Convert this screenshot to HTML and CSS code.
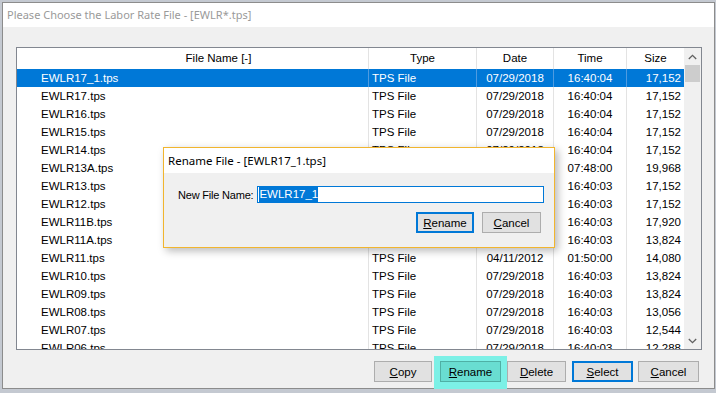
FILE: index.html
```html
<!DOCTYPE html>
<html lang="en">
<head>
  <meta charset="UTF-8">
  <title>Please Choose the Labor Rate File</title>
  <link rel="stylesheet" href="styles.css">
</head>
<body>
  <div class="window">
    <div class="titlebar">Please Choose the Labor Rate File - [EWLR*.tps]</div>
    <div class="client">
      <div class="listview">
        <div class="list-main">
          <div class="row header">
            <span class="c-name">File Name [-]</span>
            <span class="c-type">Type</span>
            <span class="c-date">Date</span>
            <span class="c-time">Time</span>
            <span class="c-size">Size</span>
          </div>
          <div class="row selected">
            <span class="c-name">EWLR17_1.tps</span><span class="c-type">TPS File</span><span class="c-date">07/29/2018</span><span class="c-time">16:40:04</span><span class="c-size">17,152</span>
          </div>
          <div class="row">
            <span class="c-name">EWLR17.tps</span><span class="c-type">TPS File</span><span class="c-date">07/29/2018</span><span class="c-time">16:40:04</span><span class="c-size">17,152</span>
          </div>
          <div class="row">
            <span class="c-name">EWLR16.tps</span><span class="c-type">TPS File</span><span class="c-date">07/29/2018</span><span class="c-time">16:40:04</span><span class="c-size">17,152</span>
          </div>
          <div class="row">
            <span class="c-name">EWLR15.tps</span><span class="c-type">TPS File</span><span class="c-date">07/29/2018</span><span class="c-time">16:40:04</span><span class="c-size">17,152</span>
          </div>
          <div class="row">
            <span class="c-name">EWLR14.tps</span><span class="c-type">TPS File</span><span class="c-date">07/29/2018</span><span class="c-time">16:40:04</span><span class="c-size">17,152</span>
          </div>
          <div class="row">
            <span class="c-name">EWLR13A.tps</span><span class="c-type">TPS File</span><span class="c-date">03/14/2017</span><span class="c-time">07:48:00</span><span class="c-size">19,968</span>
          </div>
          <div class="row">
            <span class="c-name">EWLR13.tps</span><span class="c-type">TPS File</span><span class="c-date">07/29/2018</span><span class="c-time">16:40:03</span><span class="c-size">17,152</span>
          </div>
          <div class="row">
            <span class="c-name">EWLR12.tps</span><span class="c-type">TPS File</span><span class="c-date">07/29/2018</span><span class="c-time">16:40:03</span><span class="c-size">17,152</span>
          </div>
          <div class="row">
            <span class="c-name">EWLR11B.tps</span><span class="c-type">TPS File</span><span class="c-date">07/29/2018</span><span class="c-time">16:40:03</span><span class="c-size">17,920</span>
          </div>
          <div class="row">
            <span class="c-name">EWLR11A.tps</span><span class="c-type">TPS File</span><span class="c-date">07/29/2018</span><span class="c-time">16:40:03</span><span class="c-size">13,824</span>
          </div>
          <div class="row">
            <span class="c-name">EWLR11.tps</span><span class="c-type">TPS File</span><span class="c-date">04/11/2012</span><span class="c-time">01:50:00</span><span class="c-size">14,080</span>
          </div>
          <div class="row">
            <span class="c-name">EWLR10.tps</span><span class="c-type">TPS File</span><span class="c-date">07/29/2018</span><span class="c-time">16:40:03</span><span class="c-size">13,824</span>
          </div>
          <div class="row">
            <span class="c-name">EWLR09.tps</span><span class="c-type">TPS File</span><span class="c-date">07/29/2018</span><span class="c-time">16:40:03</span><span class="c-size">13,824</span>
          </div>
          <div class="row">
            <span class="c-name">EWLR08.tps</span><span class="c-type">TPS File</span><span class="c-date">07/29/2018</span><span class="c-time">16:40:03</span><span class="c-size">13,056</span>
          </div>
          <div class="row">
            <span class="c-name">EWLR07.tps</span><span class="c-type">TPS File</span><span class="c-date">07/29/2018</span><span class="c-time">16:40:03</span><span class="c-size">12,544</span>
          </div>
          <div class="row">
            <span class="c-name">EWLR06.tps</span><span class="c-type">TPS File</span><span class="c-date">07/29/2018</span><span class="c-time">16:40:03</span><span class="c-size">12,288</span>
          </div>
        </div>
        <div class="vscroll">
          <span class="arrow">
            <svg width="9" height="6" viewBox="0 0 9 6"><polyline points="0.8,5 4.5,1.3 8.2,5" fill="none" stroke="#606060" stroke-width="1.3"/></svg>
          </span>
          <span class="thumb"></span>
          <span class="track"></span>
          <span class="arrow">
            <svg width="9" height="6" viewBox="0 0 9 6"><polyline points="0.8,1 4.5,4.7 8.2,1" fill="none" stroke="#606060" stroke-width="1.3"/></svg>
          </span>
        </div>
      </div>

      <div class="actions">
        <button class="btn btn-copy"><u>C</u>opy</button>
        <button class="btn btn-rename marked"><u>R</u>ename</button>
        <button class="btn btn-delete"><u>D</u>elete</button>
        <button class="btn btn-select default"><u>S</u>elect</button>
        <button class="btn btn-cancel"><u>C</u>ancel</button>
      </div>
    </div>

    <!-- modal over the file list -->
    <div class="rename-dialog">
      <div class="dlg-title">Rename File - [EWLR17_1.tps]</div>
      <div class="dlg-body">
        <div class="field">
          <label class="field-label">New File Name:</label>
          <div class="field-input"><span class="sel-text">EWLR17_1</span></div>
        </div>
        <div class="dlg-buttons">
          <button class="btn default dlg-ok"><u>R</u>ename</button>
          <button class="btn dlg-cancel"><u>C</u>ancel</button>
        </div>
      </div>
    </div>
  </div>
</body>
</html>
```

FILE: styles.css
```css
* {
  margin: 0;
  padding: 0;
  box-sizing: border-box;
}

body {
  width: 716px;
  height: 393px;
  overflow: hidden;
  background: #c4c9d1;
  font-family: "Liberation Sans", Arial, sans-serif;
  font-size: 11.5px;
  color: #000;
}

.window {
  position: relative;
  width: 713px;
  height: 387px;
  margin: 2px 0 0 2px;
  border: 1px solid #8c8c8c;
  background: #f0f0f0;
  display: flex;
  flex-direction: column;
}

.titlebar {
  height: 24px;
  line-height: 24px;
  padding-left: 4px;
  background: #fff;
  color: #9a9a9a;
  font-family: "Noto Sans", "Open Sans", sans-serif;
  font-size: 11px;
}

.client {
  flex: 1;
  padding: 20px 12px 0 13px;
}

/* list view */
.listview {
  width: 686px;
  height: 303px;
  border: 1px solid #828790;
  background: #fff;
  display: flex;
  overflow: hidden;
}

.list-main {
  flex: 1;
  overflow: hidden;
}

.row {
  display: grid;
  grid-template-columns: 351px 108px 77px 73px 58px;
  height: 18px;
  line-height: 18px;
  white-space: nowrap;
}

.row span {
  overflow: hidden;
}

.row span + span {
  border-left: 1px solid #e3e3e3;
}

.row .c-name {
  padding-left: 24px;
}

.row .c-type {
  padding-left: 3px;
}

.row .c-date,
.row .c-time {
  text-align: center;
}

.row .c-size {
  text-align: right;
  padding-right: 3px;
}

.row.header {
  height: 21px;
  line-height: 20px;
}

.row.header span {
  text-align: center;
  padding: 0;
}

.row.header .c-name {
  padding-left: 52px;
}

.row.selected {
  background: #0078d7;
  color: #fff;
}

.row.selected span + span {
  border-left-color: #4f9be0;
}

.vscroll {
  width: 17px;
  background: #f0f0f0;
  display: flex;
  flex-direction: column;
  align-items: center;
}

.vscroll .arrow {
  height: 17px;
  display: flex;
  align-items: center;
  justify-content: center;
}

.vscroll .thumb {
  width: 15px;
  height: 17px;
  background: #cdcdcd;
}

.vscroll .track {
  flex: 1;
}

/* buttons */
.btn {
  height: 21px;
  border: 1px solid #adadad;
  background: #e1e1e1;
  font-family: "Liberation Sans", Arial, sans-serif;
  font-size: 11.5px;
  color: #000;
}

.btn.default {
  border: 2px solid #0078d7;
}

.actions {
  display: flex;
  justify-content: flex-end;
  gap: 6px;
  margin: 11px 3px 0 0;
}

.btn-copy {
  width: 58px;
  margin-right: 2px;
}

.btn-rename {
  width: 61px;
}

.btn-delete {
  width: 59px;
}

.btn-select {
  width: 61px;
  margin-right: -1px;
}

.btn-cancel {
  width: 61px;
}

.btn.marked {
  background: #69ddd1;
  border-color: #4fb0a5;
  box-shadow: 0 1px 0 6px #7cf0e6;
}

/* rename dialog */
.rename-dialog {
  position: absolute;
  left: 160px;
  top: 144px;
  width: 392px;
  height: 101px;
  border: 1px solid #f1b52e;
  background: #f0f0f0;
  box-shadow: 3px 3px 8px rgba(0, 0, 0, 0.28);
  display: flex;
  flex-direction: column;
}

.dlg-title {
  height: 25px;
  line-height: 25px;
  padding-left: 4px;
  background: #fff;
  font-family: "Noto Sans", "Open Sans", sans-serif;
  font-size: 11.5px;
}

.dlg-body {
  padding: 13px 10px 0 14px;
}

.field {
  display: flex;
  align-items: center;
}

.field-label {
  font-size: 11px;
  letter-spacing: -0.2px;
  margin-right: 4px;
}

.field-input {
  flex: 1;
  height: 17px;
  line-height: 15px;
  border: 1px solid #0078d7;
  background: #fff;
  padding-left: 1px;
}

.sel-text {
  background: #0078d7;
  color: #fff;
  display: inline-block;
}

.dlg-buttons {
  display: flex;
  justify-content: flex-end;
  gap: 8px;
  margin: 9px 3px 0 0;
}

.dlg-ok {
  width: 58px;
}

.dlg-cancel {
  width: 59px;
}
```
